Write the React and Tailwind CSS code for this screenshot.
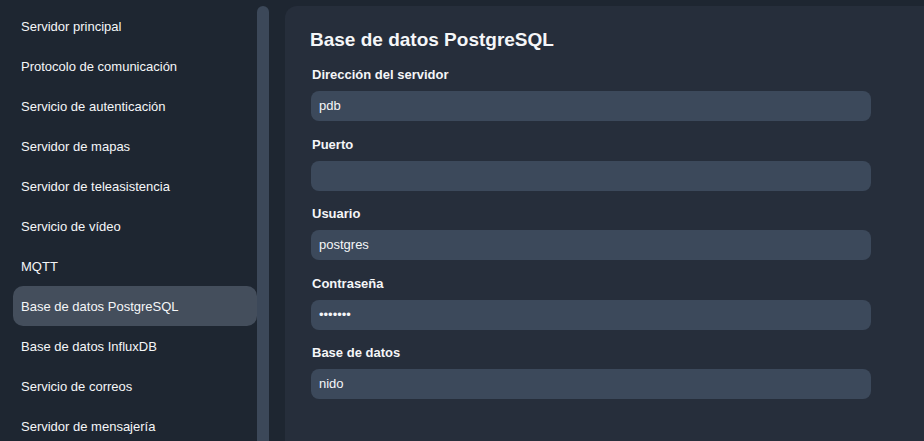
import React from "react";

const items = [
  "Servidor principal",
  "Protocolo de comunicación",
  "Servicio de autenticación",
  "Servidor de mapas",
  "Servidor de teleasistencia",
  "Servicio de vídeo",
  "MQTT",
  "Base de datos PostgreSQL",
  "Base de datos InfluxDB",
  "Servicio de correos",
  "Servidor de mensajería",
];

const fields = [
  ["Dirección del servidor", "pdb"],
  ["Puerto", ""],
  ["Usuario", "postgres"],
  ["Contraseña", "•••••••"],
  ["Base de datos", "nido"],
];

export default function App() {
  return (
    <div
      className="flex w-[924px] h-[441px] overflow-hidden bg-[#1e2631] text-[#f5f6f8]"
      style={{ fontFamily: '"Liberation Sans", Arial, sans-serif' }}
    >
      <div className="flex shrink-0 pt-[6px]">
        <div className="ml-[13px] w-[244px] flex flex-col">
          {items.map((t) => {
            const active = t === "Base de datos PostgreSQL";
            return (
              <div
                key={t}
                className={
                  "h-[40px] shrink-0 flex items-center pt-[1px] px-[8px] text-[13px] rounded-[10px] " +
                  (active ? "bg-[#444e5c]" : "")
                }
              >
                {t}
              </div>
            );
          })}
        </div>
        <div className="w-[12px] bg-[#3c4859] rounded-t-[6px]" />
      </div>
      <div className="ml-[16px] mt-[6px] w-[680px] shrink-0 bg-[#262e3b] rounded-tl-[12px] pl-[26px] pt-[22px]">
        <h1 className="text-[19px] leading-[24px] font-bold -ml-[1px]">Base de datos PostgreSQL</h1>
        <div className="mt-[15px] flex flex-col gap-[15.5px]">
          {fields.map(([l, v]) => (
            <div key={l} className="flex flex-col">
              <div className="text-[13px] leading-[16px] font-bold pl-[1px]">{l}</div>
              <div className="mt-[8px] w-[560px] h-[30px] rounded-[8px] bg-[#3c495b] flex items-center px-[8px] text-[13px]">
                {v}
              </div>
            </div>
          ))}
        </div>
      </div>
    </div>
  );
}
